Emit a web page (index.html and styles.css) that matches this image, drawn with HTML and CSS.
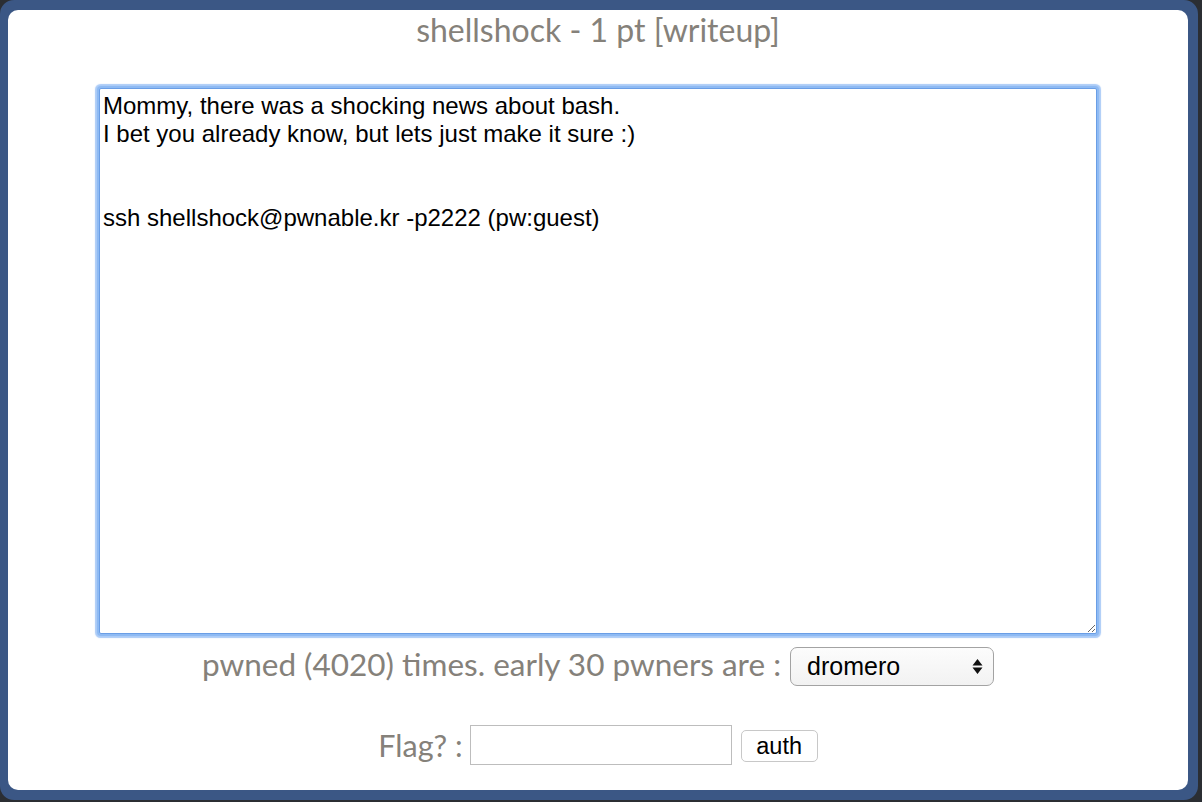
FILE: index.html
```html
<!DOCTYPE html>
<html>
<head>
<meta charset="utf-8">
<link rel="stylesheet" href="styles.css">
</head>
<body>
<div class="frame">
  <div class="modal">
    <h1 class="title">shellshock - 1 pt [writeup]</h1>
    <textarea class="desc">Mommy, there was a shocking news about bash.
I bet you already know, but lets just make it sure :)


ssh shellshock@pwnable.kr -p2222 (pw:guest)</textarea>
    <div class="pwned">
      <span>pwned (4020) times. early 30 pwners are :</span>
      <div class="select"><span>dromero</span>
        <svg class="arrows" width="11" height="17" viewBox="0 0 11 17"><path d="M5.5 1 L10.5 7.5 H0.5 Z M5.5 16 L10.5 9.5 H0.5 Z" fill="#111"/></svg>
      </div>
    </div>
    <div class="flag">
      <span>Flag? :</span>
      <div class="input"></div>
      <div class="btn">auth</div>
    </div>
  </div>
</div>
</body>
</html>
```

FILE: styles.css
```css
html, body {
  margin: 0;
  padding: 0;
  background: #2b2e33;
  width: 1202px;
  height: 802px;
  overflow: hidden;
}
.frame {
  width: 1198px;
  height: 800px;
  box-sizing: border-box;
  border: solid #3b5785;
  border-width: 10px 10px 10px 8px;
  border-radius: 14px;
  background: #3b5785;
}
.modal {
  height: 100%;
  background: #fff;
  border-radius: 10px;
  display: flex;
  flex-direction: column;
  align-items: center;
  font-family: Lato, sans-serif;
  color: #85817a;
}
.title {
  margin: 1px 0 0 0;
  font-size: 32px;
  font-weight: normal;
  line-height: 38px;
}
.desc {
  margin-top: 39px;
  width: 998px;
  height: 546px;
  box-sizing: border-box;
  border: 1px solid #6a9ee6;
  border-radius: 2px;
  box-shadow: 0 0 0 2px #8ebaf3, 0 0 1px 4px rgba(150, 190, 245, 0.8);
  outline: none;
  padding: 3px 3px 1px;
  font-family: "Liberation Sans", Arial, sans-serif;
  font-size: 24px;
  line-height: 28px;
  color: #000;
  resize: both;
}
.pwned {
  margin-top: 9px;
  display: flex;
  align-items: center;
  font-size: 31.5px;
  height: 42px;
}
.select {
  margin-left: 9px;
  margin-top: 5px;
  width: 204px;
  height: 39px;
  box-sizing: border-box;
  border: 1px solid #a3a3a3;
  border-radius: 7px;
  background: linear-gradient(#fcfcfc, #f2f2f2);
  display: flex;
  align-items: center;
  justify-content: space-between;
  padding: 0 10px 0 16px;
  font-family: "Liberation Sans", Arial, sans-serif;
  font-size: 25px;
  color: #000;
}
.flag {
  margin-top: 40px;
  display: flex;
  align-items: center;
  font-size: 30.5px;
}
.input {
  margin-left: 7px;
  width: 262px;
  height: 40px;
  box-sizing: border-box;
  border: 1px solid #bdbdbd;
  background: #fff;
}
.btn {
  margin-left: 9px;
  margin-top: 2px;
  width: 77px;
  height: 32px;
  box-sizing: border-box;
  border: 1px solid #c8c8c8;
  border-radius: 5px;
  background: #fff;
  display: flex;
  align-items: center;
  justify-content: center;
  font-family: "Liberation Sans", Arial, sans-serif;
  font-size: 23.5px;
  color: #000;
}
```
